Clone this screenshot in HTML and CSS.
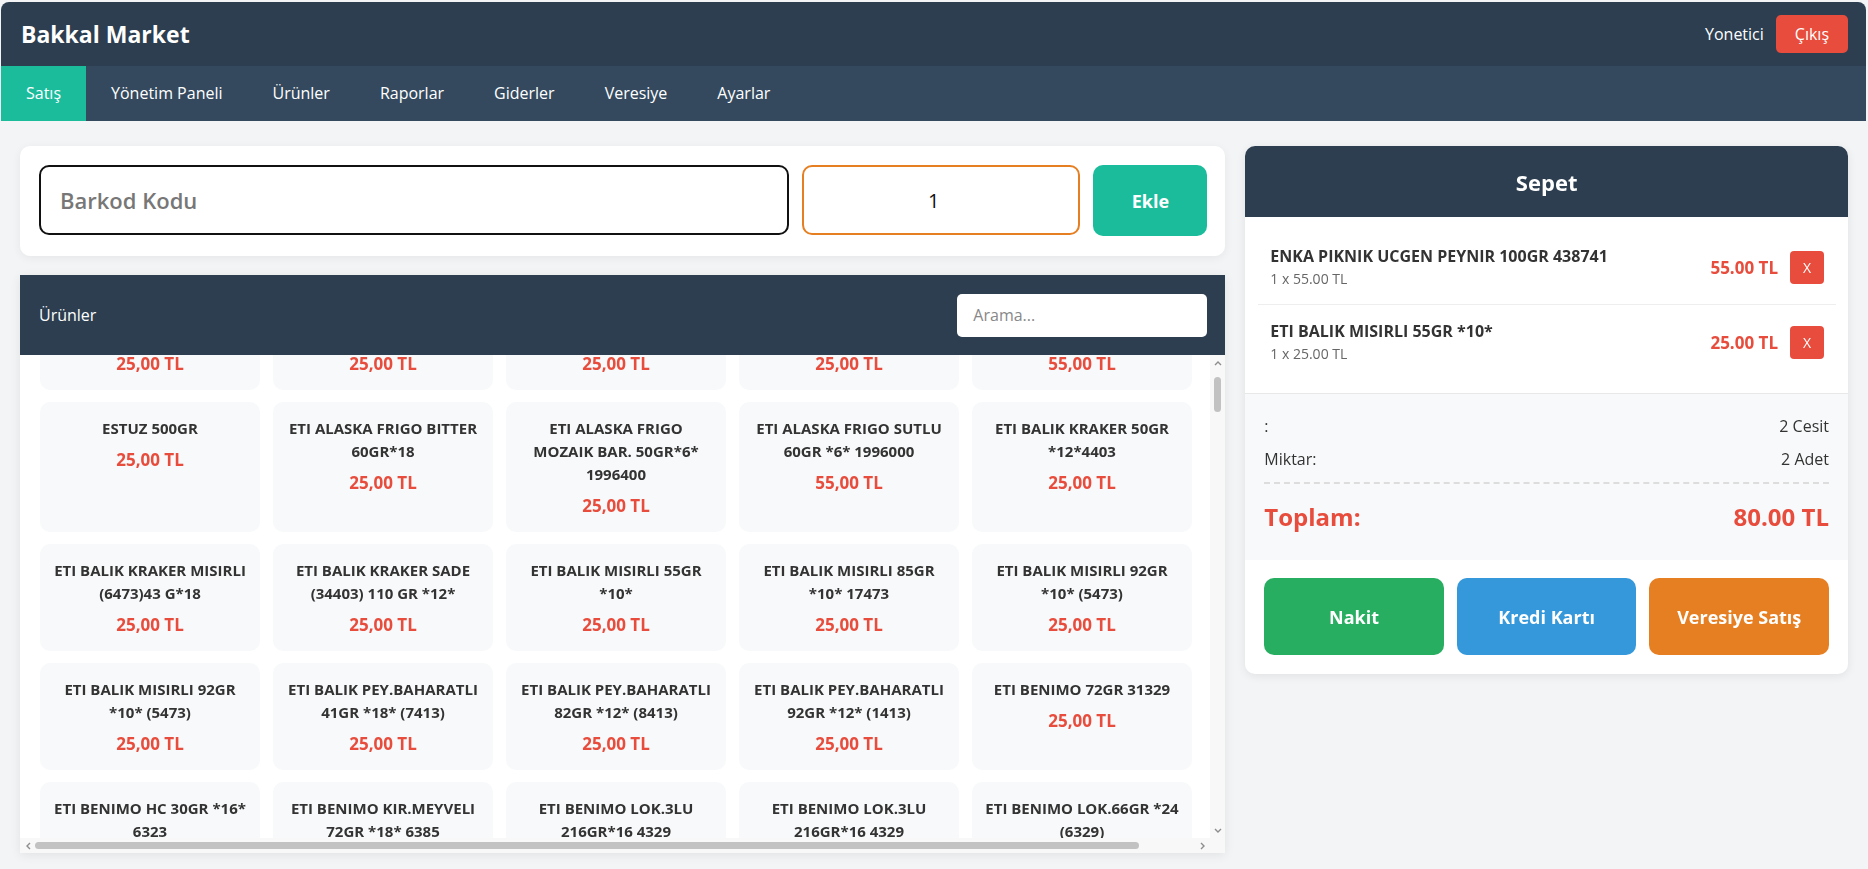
FILE: index.html
```html
<!DOCTYPE html>
<html lang="tr">
<head>
    <meta charset="UTF-8">
    <meta name="viewport" content="width=device-width, initial-scale=1.0">
    <title>Bakkal Market - Satış</title>
    <link rel="stylesheet" href="styles.css">
</head>
<body>
    <div class="app">
        <header class="topbar">
            <div class="brand-row">
                <h1 class="brand">Bakkal Market</h1>
                <div class="user-box">
                    <span class="user-name">Yonetici</span>
                    <button class="logout-btn">Çıkış</button>
                </div>
            </div>
            <nav class="main-nav">
                <a href="#" class="active">Satış</a>
                <a href="#">Yönetim Paneli</a>
                <a href="#">Ürünler</a>
                <a href="#">Raporlar</a>
                <a href="#">Giderler</a>
                <a href="#">Veresiye</a>
                <a href="#">Ayarlar</a>
            </nav>
        </header>

        <main class="sale-page">
            <section class="left-col">
                <div class="barcode-card">
                    <input type="text" class="barcode-input" placeholder="Barkod Kodu" autofocus>
                    <input type="number" class="qty-input" value="1" min="1">
                    <button class="add-btn">Ekle</button>
                </div>

                <div class="products-panel">
                    <div class="products-head">
                        <span>Ürünler</span>
                        <input type="text" class="search-input" placeholder="Arama...">
                    </div>
                    <div class="products-body">
                        <div class="products-scroll" id="productScroll">
                            <div class="product-grid" id="productGrid"></div>
                        </div>
                        <div class="vbar">
                            <span class="bar-arrow"><svg width="8" height="6" viewBox="0 0 8 6"><polyline points="1,5 4,2 7,5"/></svg></span>
                            <div class="vtrack" id="vTrack"><div class="vthumb" id="vThumb"></div></div>
                            <span class="bar-arrow"><svg width="8" height="6" viewBox="0 0 8 6"><polyline points="1,1 4,4 7,1"/></svg></span>
                        </div>
                        <div class="hbar">
                            <span class="bar-arrow"><svg width="6" height="8" viewBox="0 0 6 8"><polyline points="5,1 2,4 5,7"/></svg></span>
                            <div class="htrack" id="hTrack"><div class="hthumb" id="hThumb"></div></div>
                            <span class="bar-arrow"><svg width="6" height="8" viewBox="0 0 6 8"><polyline points="1,1 4,4 1,7"/></svg></span>
                        </div>
                        <div class="bar-corner"></div>
                    </div>
                </div>
            </section>

            <aside class="cart-card">
                <div class="cart-head">Sepet</div>
                <div class="cart-items">
                    <div class="cart-item">
                        <div class="item-info">
                            <div class="item-name">ENKA PIKNIK UCGEN PEYNIR 100GR 438741</div>
                            <div class="item-sub">1 x 55.00 TL</div>
                        </div>
                        <div class="item-price">55.00 TL</div>
                        <button class="remove-btn">X</button>
                    </div>
                    <div class="cart-item">
                        <div class="item-info">
                            <div class="item-name">ETI BALIK MISIRLI 55GR *10*</div>
                            <div class="item-sub">1 x 25.00 TL</div>
                        </div>
                        <div class="item-price">25.00 TL</div>
                        <button class="remove-btn">X</button>
                    </div>
                </div>
                <div class="cart-summary">
                    <div class="summary-row"><span>:</span><span>2 Cesit</span></div>
                    <div class="summary-row"><span>Miktar:</span><span>2 Adet</span></div>
                    <div class="summary-total"><span>Toplam:</span><span>80.00 TL</span></div>
                </div>
                <div class="pay-buttons">
                    <button class="pay-btn cash">Nakit</button>
                    <button class="pay-btn card">Kredi Kartı</button>
                    <button class="pay-btn credit">Veresiye Satış</button>
                </div>
            </aside>
        </main>
    </div>

    <script>
        const products = [
            { name: 'ERSAN DOMATES SALCASI 830GR *12*', price: 25 },
            { name: 'ESKIMO KORNET CILEK 120ML *24*', price: 25 },
            { name: 'ESKIMO KORNET KAKAO 120ML *24*', price: 25 },
            { name: 'ESKIMO PALET VISNE 60ML *30*', price: 25 },
            { name: 'ESTUZ 1KG IYOTLU SOFRA TUZU', price: 55 },
            { name: 'ESTUZ 500GR', price: 25 },
            { name: 'ETI ALASKA FRIGO BITTER 60GR*18', price: 25 },
            { name: 'ETI ALASKA FRIGO MOZAIK BAR. 50GR*6* 1996400', price: 25 },
            { name: 'ETI ALASKA FRIGO SUTLU 60GR *6* 1996000', price: 55 },
            { name: 'ETI BALIK KRAKER 50GR *12*4403', price: 25 },
            { name: 'ETI BALIK KRAKER MISIRLI (6473)43 G*18', price: 25 },
            { name: 'ETI BALIK KRAKER SADE (34403) 110 GR *12*', price: 25 },
            { name: 'ETI BALIK MISIRLI 55GR *10*', price: 25 },
            { name: 'ETI BALIK MISIRLI 85GR *10* 17473', price: 25 },
            { name: 'ETI BALIK MISIRLI 92GR *10* (5473)', price: 25 },
            { name: 'ETI BALIK MISIRLI 92GR *10* (5473)', price: 25 },
            { name: 'ETI BALIK PEY.BAHARATLI 41GR *18* (7413)', price: 25 },
            { name: 'ETI BALIK PEY.BAHARATLI 82GR *12* (8413)', price: 25 },
            { name: 'ETI BALIK PEY.BAHARATLI 92GR *12* (1413)', price: 25 },
            { name: 'ETI BENIMO 72GR 31329', price: 25 },
            { name: 'ETI BENIMO HC 30GR *16* 6323', price: 25 },
            { name: 'ETI BENIMO KIR.MEYVELI 72GR *18* 6385', price: 25 },
            { name: 'ETI BENIMO LOK.3LU 216GR*16 4329', price: 25 },
            { name: 'ETI BENIMO LOK.3LU 216GR*16 4329', price: 25 },
            { name: 'ETI BENIMO LOK.66GR *24 (6329)', price: 25 }
        ];

        // rest of the catalogue: product lines x package sizes
        const lines = ['ETI BURCAK', 'ETI CIN', 'ETI CRAX', 'ETI FFOX', 'ETI GONG', 'ETI HOSBES',
            'ETI KARAM', 'ETI LUPPO', 'ETI PETIBOR', 'ETI POPKEK', 'ETI PUF', 'ETI TUTKU',
            'ETI WANTED', 'FALIM SAKIZ', 'FILIZ MAKARNA', 'KENT BONIBON', 'KNORR CORBA',
            'MAGGI BULYON', 'NESTLE DAMAK', 'OLIN ZEYTINYAGI', 'PINAR SUT', 'SEK AYRAN',
            'TAT KETCAP', 'TORKU BANADA', 'ULKER HALLEY', 'ULKER GOFRET', 'YUDUM AYCICEK'];
        const sizes = ['40GR *24*', '75GR *12*', '100GR *12*', '150GR *12*', '200GR *6*',
            '300GR *6*', '500GR *6*', '1KG *4*', '2KG *2*', '5KG'];
        lines.forEach(line => {
            sizes.forEach((size, i) => {
                products.push({ name: line + ' ' + size, price: i % 4 === 3 ? 55 : 25 });
            });
        });

        const scrollBox = document.getElementById('productScroll');

        function formatPrice(value) {
            return value.toFixed(2).replace('.', ',') + ' TL';
        }

        function renderProducts() {
            const grid = document.getElementById('productGrid');
            grid.innerHTML = products.map(p =>
                `<div class="product-card">
                    <div class="product-name">${p.name}</div>
                    <div class="product-price">${formatPrice(p.price)}</div>
                </div>`
            ).join('');
        }

        // keep the scrollbar thumbs in sync with the product list
        function updateBars() {
            const vTrack = document.getElementById('vTrack').clientHeight;
            const hTrack = document.getElementById('hTrack').clientWidth;
            const vThumb = document.getElementById('vThumb');
            const hThumb = document.getElementById('hThumb');

            const vSize = Math.max(20, vTrack * scrollBox.clientHeight / scrollBox.scrollHeight);
            const vMax = scrollBox.scrollHeight - scrollBox.clientHeight;
            vThumb.style.height = vSize + 'px';
            vThumb.style.marginTop = (vMax > 0 ? scrollBox.scrollTop / vMax * (vTrack - vSize) : 0) + 'px';

            const hSize = Math.max(20, hTrack * scrollBox.clientWidth / scrollBox.scrollWidth);
            const hMax = scrollBox.scrollWidth - scrollBox.clientWidth;
            hThumb.style.width = hSize + 'px';
            hThumb.style.marginLeft = (hMax > 0 ? scrollBox.scrollLeft / hMax * (hTrack - hSize) : 0) + 'px';
        }

        renderProducts();
        scrollBox.addEventListener('scroll', updateBars);
        scrollBox.scrollTop = 92;
        updateBars();
    </script>
</body>
</html>
```

FILE: styles.css
```css
body {
    margin: 0;
    font-family: "Open Sans", "Noto Sans", sans-serif;
    background-color: #f3f4f6;
    color: #333;
}
button, input {
    font-family: inherit;
}
.app {
    height: 100vh;
    display: flex;
    flex-direction: column;
}

/* header */
.topbar {
    margin: 2px 2px 0 1px;
    border-radius: 8px 8px 0 0;
    overflow: hidden;
}
.brand-row {
    height: 64px;
    background-color: #2c3e50;
    display: flex;
    align-items: center;
    justify-content: space-between;
    padding: 0 18px 0 20px;
}
.brand {
    margin: 0;
    font-size: 23px;
    font-weight: 700;
    color: #fff;
}
.user-box {
    display: flex;
    align-items: center;
    gap: 12px;
    color: #fff;
    font-size: 16px;
}
.logout-btn {
    background-color: #e74c3c;
    color: #fff;
    border: none;
    border-radius: 5px;
    height: 38px;
    padding: 0 19px;
    font-size: 16px;
    cursor: pointer;
}
.main-nav {
    display: flex;
    height: 55px;
    background-color: #34495e;
}
.main-nav a {
    color: #fff;
    text-decoration: none;
    padding: 0 25px;
    line-height: 55px;
    font-size: 16px;
}
.main-nav a.active {
    background-color: #1abc9c;
}

/* page layout */
.sale-page {
    flex: 1;
    min-height: 0;
    display: grid;
    grid-template-columns: minmax(0, 2fr) minmax(0, 1fr);
    grid-template-rows: minmax(0, 1fr);
    gap: 20px;
    padding: 25px 20px 16px;
}
.left-col {
    display: flex;
    flex-direction: column;
    gap: 19px;
    min-height: 0;
    min-width: 0;
}

/* barcode entry */
.barcode-card {
    display: flex;
    gap: 13px;
    background-color: #fff;
    border-radius: 10px;
    padding: 19px 18px 20px 19px;
    box-shadow: 0 2px 10px rgba(0, 0, 0, 0.06);
}
.barcode-input {
    flex: 1;
    min-width: 0;
    height: 70px;
    box-sizing: border-box;
    border: 2px solid #111;
    border-radius: 10px;
    padding: 0 19px;
    font-size: 22px;
    font-weight: 600;
    outline: none;
}
.barcode-input::placeholder {
    color: #777;
}
.qty-input {
    width: 278px;
    height: 70px;
    box-sizing: border-box;
    border: 2px solid #e67e22;
    border-radius: 10px;
    text-align: center;
    font-size: 20px;
    color: #111;
    outline: none;
}
.add-btn {
    width: 114px;
    height: 71px;
    background-color: #1abc9c;
    color: #fff;
    border: none;
    border-radius: 10px;
    font-size: 18px;
    font-weight: 700;
    cursor: pointer;
}

/* product list */
.products-panel {
    flex: 1;
    min-height: 0;
    min-width: 0;
    display: flex;
    flex-direction: column;
    background-color: #fff;
    box-shadow: 0 2px 10px rgba(0, 0, 0, 0.08);
}
.products-head {
    height: 80px;
    flex-shrink: 0;
    display: flex;
    align-items: center;
    justify-content: space-between;
    padding: 0 18px 0 19px;
    background-color: #2c3e50;
    color: #fff;
    font-size: 16px;
}
.search-input {
    width: 250px;
    height: 43px;
    box-sizing: border-box;
    border: none;
    border-radius: 5px;
    padding: 0 16px;
    font-size: 16px;
    outline: none;
}
.search-input::placeholder {
    color: #888;
}
.products-body {
    flex: 1;
    min-height: 0;
    display: grid;
    grid-template-columns: minmax(0, 1fr) 15px;
    grid-template-rows: minmax(0, 1fr) 15px;
}
.products-scroll {
    overflow: auto;
    scrollbar-width: none;
}
.products-scroll::-webkit-scrollbar {
    display: none;
}

/* scrollbars of the product list */
.vbar, .hbar, .bar-corner {
    background-color: #f8f8f8;
}
.vbar {
    display: flex;
    flex-direction: column;
}
.hbar {
    display: flex;
}
.bar-arrow {
    flex: 0 0 15px;
    height: 15px;
    display: flex;
    align-items: center;
    justify-content: center;
}
.bar-arrow svg {
    fill: none;
    stroke: #8d8d8d;
    stroke-width: 1.4;
}
.vtrack {
    flex: 1;
    min-height: 0;
}
.vthumb {
    width: 7px;
    margin-left: 4px;
    border-radius: 4px;
    background-color: #c2c2c2;
}
.htrack {
    flex: 1;
    min-width: 0;
    padding-top: 4px;
}
.hthumb {
    height: 7px;
    border-radius: 4px;
    background-color: #c2c2c2;
}

.product-grid {
    display: grid;
    grid-template-columns: repeat(5, 220px);
    gap: 12px 13px;
    width: 1250px;
    box-sizing: border-box;
    padding: 20px;
}
.product-card {
    background-color: #f8f9fa;
    border-radius: 10px;
    padding: 15px 13px;
    text-align: center;
}
.product-name {
    font-size: 15px;
    font-weight: 700;
    line-height: 23px;
    color: #333;
}
.product-price {
    margin-top: 9px;
    font-size: 17px;
    font-weight: 700;
    line-height: 22px;
    color: #e74c3c;
}

/* cart */
.cart-card {
    align-self: start;
    background-color: #fff;
    border-radius: 10px;
    overflow: hidden;
    box-shadow: 0 2px 10px rgba(0, 0, 0, 0.08);
}
.cart-head {
    height: 71px;
    display: flex;
    align-items: center;
    justify-content: center;
    background-color: #2c3e50;
    color: #fff;
    font-size: 22px;
    font-weight: 700;
}
.cart-items {
    padding: 13px 12px 14px 13px;
}
.cart-item {
    display: flex;
    align-items: center;
    padding: 15px 12px;
    border-bottom: 1px solid #eee;
}
.cart-item:last-child {
    border-bottom: none;
}
.item-info {
    flex: 1;
}
.item-name {
    font-size: 16px;
    font-weight: 700;
    line-height: 22px;
    margin-bottom: 2px;
    color: #333;
}
.item-sub {
    font-size: 14px;
    line-height: 20px;
    color: #666;
}
.item-price {
    margin-right: 12px;
    font-size: 17px;
    font-weight: 700;
    color: #e74c3c;
}
.remove-btn {
    width: 34px;
    height: 33px;
    background-color: #e74c3c;
    color: #fff;
    border: none;
    border-radius: 4px;
    font-size: 14px;
    cursor: pointer;
}
.cart-summary {
    background-color: #f8f9fa;
    border-top: 1px solid #e8e8e8;
    padding: 19px 19px 27px;
    font-size: 16px;
}
.summary-row {
    display: flex;
    justify-content: space-between;
    line-height: 26px;
    margin-bottom: 7px;
}
.summary-total {
    display: flex;
    justify-content: space-between;
    margin-top: 10px;
    padding-top: 17px;
    border-top: 2px dashed #ddd;
    line-height: 32px;
    font-size: 24px;
    font-weight: 700;
    color: #e74c3c;
}
.pay-buttons {
    display: grid;
    grid-template-columns: repeat(3, 1fr);
    gap: 13px;
    padding: 18px 19px 19px;
}
.pay-btn {
    height: 77px;
    border: none;
    border-radius: 10px;
    color: #fff;
    font-size: 18px;
    font-weight: 700;
    cursor: pointer;
}
.pay-btn.cash {
    background-color: #27ae60;
}
.pay-btn.card {
    background-color: #3498db;
}
.pay-btn.credit {
    background-color: #e67e22;
}
```
